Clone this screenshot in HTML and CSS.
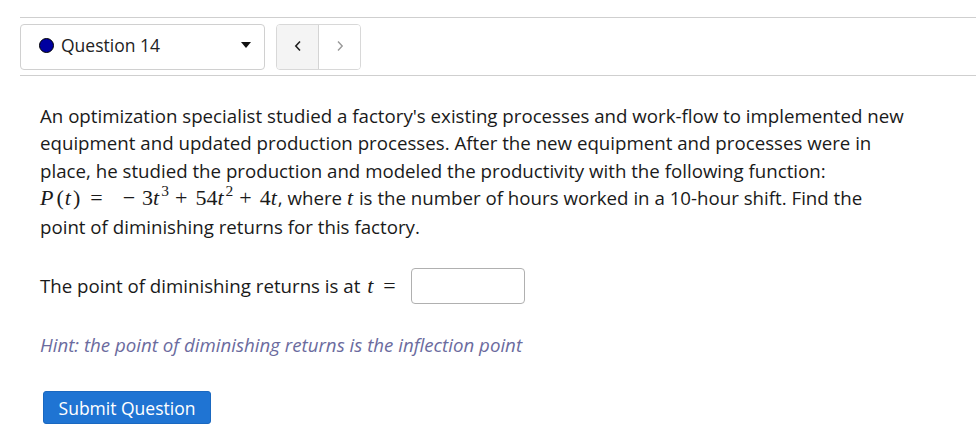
FILE: index.html
```html
<!DOCTYPE html>
<html>
<head>
<meta charset="utf-8">
<link rel="stylesheet" href="styles.css">
</head>
<body>
<div class="page">
  <div class="toolbar">
    <div class="qselect">
      <span class="dot"></span>
      <span class="qlabel">Question 14</span>
      <span class="caret"></span>
    </div>
    <div class="nav">
      <button class="navbtn prev"><svg width="10" height="14" viewBox="0 0 10 14"><path d="M7 2.5 L2.8 7 L7 11.5" fill="none" stroke="#222" stroke-width="1.6"/></svg></button>
      <button class="navbtn next"><svg width="10" height="14" viewBox="0 0 10 14"><path d="M3 2.5 L7.2 7 L3 11.5" fill="none" stroke="#999" stroke-width="1.4"/></svg></button>
    </div>
  </div>
  <div class="content">
    <p class="problem">An optimization specialist studied a factory's existing processes and work-flow to implemented new equipment and updated production processes. After the new equipment and processes were in place, he studied the production and modeled the productivity with the following function: <span class="math"><i class="P">P</i><span class="par">(</span><i>t</i><span class="par">)</span><span class="rel">=</span><span class="neg">−</span>3<i>t</i><sup>3</sup><span class="bin">+</span>54<i>t</i><sup>2</sup><span class="bin">+</span>4<i>t</i></span>, where <span class="math"><i>t</i></span> is the number of hours worked in a 10-hour shift. Find the point of diminishing returns for this factory.</p>
    <div class="answer">
      <span>The point of diminishing returns is at <span class="math"><i>t</i><span class="rel">=</span></span></span>
      <span class="input"></span>
    </div>
    <p class="hint">Hint: the point of diminishing returns is the inflection point</p>
    <button class="submit">Submit Question</button>
  </div>
</div>
</body>
</html>
```
FILE: styles.css
```css
html, body { margin: 0; padding: 0; background: #fff; }
body { font-family: "Open Sans", "Liberation Sans", sans-serif; color: #1a1a1a; }
.page { padding: 17px 0 0 20px; }
.toolbar {
  display: flex; align-items: center; gap: 11px;
  border-top: 1px solid #cfcfcf; border-bottom: 1px solid #cfcfcf;
  padding: 5px 0 5px 0; height: 47px;
}
.qselect {
  width: 245px; height: 46px; box-sizing: border-box;
  border: 1px solid #d0d0d0; border-radius: 4px;
  display: flex; align-items: center; padding: 0 12px 3px 18px;
}
.dot { border-radius: 50%; background: #0000a0; border: 1px solid #000; box-sizing: border-box; width: 15px; height: 15px; }
.qlabel { font-size: 17.5px; margin-left: 7px; flex: 1; color: #222; }
.caret { width: 0; height: 0; border-left: 5px solid transparent; border-right: 5px solid transparent; border-top: 6px solid #111; margin-right: 1px; }
.nav { display: flex; height: 46px; border: 1px solid #d8d8d8; border-radius: 4px; box-sizing: border-box; overflow: hidden; }
.navbtn { width: 42px; border: 0; background: #fff; padding: 0 0 2px 0; display: flex; align-items: center; justify-content: center; }
.navbtn.prev { background: #f4f4f4; border-right: 1px solid #d4d4d4; }
.navbtn.next { width: 41px; }
.content { padding: 26px 0 0 20px; }
.problem { margin: 0; font-size: 18.7px; line-height: 27.3px; width: 867px; }
.math { font-family: "Liberation Serif", "DejaVu Serif", serif; font-size: 22px; }
.math i { font-style: italic; margin-right: 1px; }
.math i.P { margin-right: 2px; }
.par { margin: 0 1px; }
.math sup { font-size: 15.5px; vertical-align: 0; position: relative; top: -9px; margin-left: 1px; }
.rel { margin: 0 9px 0 9px; }
.neg { margin: 0 7px 0 11px; }
.bin { margin: 0 8px 0 6px; }
.answer { display: flex; align-items: center; font-size: 18.7px; margin-top: 28px; }
.answer .math i { margin-left: 2px; }
.input { display: inline-block; width: 112px; height: 34px; border: 1px solid #b0b0b0; border-radius: 4px; margin-left: 6px; }
.hint { margin: 28px 0 0 0; font-size: 18.7px; font-style: italic; color: #6b6b9e; }
.submit {
  margin: 34px 0 0 3px; background: #1f74d3; color: #fff; border: 1px solid #1a68c0; border-radius: 3px;
  font-family: "Open Sans", sans-serif; font-size: 17.5px; height: 33px; width: 168px; padding: 0;
}
```
